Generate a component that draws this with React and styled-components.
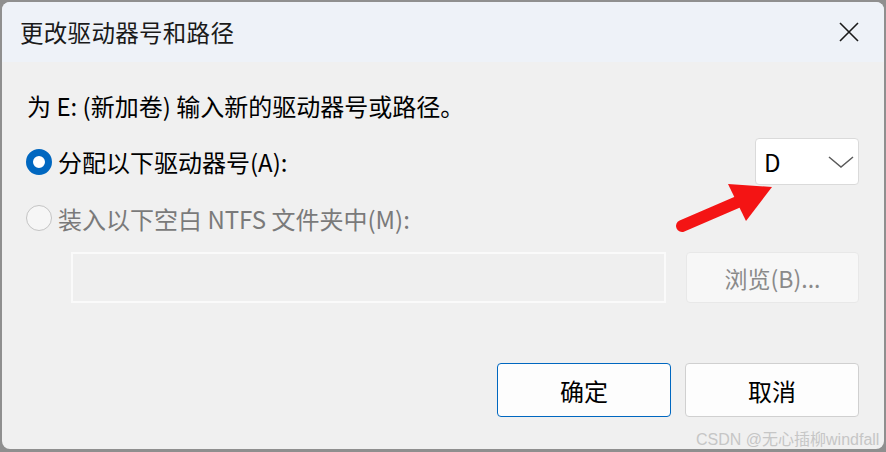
import React from "react";
import styled, { createGlobalStyle } from "styled-components";

const GlobalStyle = createGlobalStyle`
  html, body {
    margin: 0;
    padding: 0;
    background: #8f8f8f;
    overflow: hidden;
  }
  body {
    font-family: "Noto Sans CJK SC", "Noto Sans", sans-serif;
  }
`;

const Frame = styled.div`
  width: 886px;
  height: 452px;
  padding: 2px 2px 3px 2px;
  box-sizing: border-box;
`;

const Window = styled.div`
  position: relative;
  height: 100%;
  border-radius: 8px;
  background: #f0f0f0;
  overflow: hidden;
  display: flex;
  flex-direction: column;
`;

const TitleBar = styled.div`
  height: 60px;
  flex: none;
  display: flex;
  align-items: center;
  justify-content: space-between;
  padding: 0 24px 0 18px;
  background: #eef2f8;
`;

const Title = styled.div`
  font-size: 23.5px;
  color: #1a1a1a;
  letter-spacing: 0.3px;
`;

const CloseButton = styled.div`
  width: 22px;
  height: 22px;
  display: flex;
  align-items: center;
  justify-content: center;
`;

const Body = styled.div`
  flex: 1;
  display: flex;
  flex-direction: column;
  padding: 29px 25px 0 24px;
`;

const Prompt = styled.div`
  font-size: 24px;
  line-height: 30px;
  color: #000;
  padding-left: 1px;
`;

const OptionRow = styled.div`
  display: flex;
  align-items: center;
  justify-content: space-between;
  height: ${p => p.h}px;
  margin-top: ${p => p.mt}px;
`;

const RadioLabel = styled.label`
  display: flex;
  align-items: center;
  gap: 6px;
  font-size: 24px;
  color: ${p => (p.disabled ? "#7a7a7a" : "#000")};
`;

const Radio = styled.span`
  width: 26px;
  height: 26px;
  box-sizing: border-box;
  border-radius: 50%;
  flex: none;
  background: ${p => (p.checked ? "#fff" : "#f6f6f6")};
  border: ${p => (p.checked ? "7px solid #0067c0" : "1.5px solid #c4c4c4")};
`;

const Select = styled.div`
  width: 104px;
  height: 47px;
  box-sizing: border-box;
  background: #fff;
  border: 1px solid #dadada;
  border-radius: 4px;
  display: flex;
  align-items: center;
  justify-content: space-between;
  padding: 0 3px 0 8px;
  font-size: 24px;
  color: #000;
`;

const PathRow = styled.div`
  display: flex;
  gap: 20px;
  margin-top: 19px;
  padding-left: 45px;
  height: 51px;
`;

const PathInput = styled.div`
  flex: 1;
  box-sizing: border-box;
  border: 2px solid #fafafa;
  background: #efefef;
`;

const Button = styled.div`
  width: ${p => p.w}px;
  box-sizing: border-box;
  border-radius: 4px;
  display: flex;
  align-items: center;
  justify-content: center;
  font-size: ${p => (p.disabled ? 23 : 24)}px;
  background: ${p => (p.disabled ? "#f7f7f7" : "#fdfdfd")};
  color: ${p => (p.disabled ? "#8a8a8a" : "#000")};
  border: 1px solid ${p => (p.primary ? "#0067c0" : p.disabled ? "#e8e8e8" : "#d0d0d0")};
`;

const ButtonRow = styled.div`
  display: flex;
  justify-content: flex-end;
  gap: 14px;
  margin-top: 60px;
  height: 54px;
`;

const Arrow = styled.svg`
  position: absolute;
  left: 658px;
  top: 168px;
`;

const Watermark = styled.div`
  position: absolute;
  left: 694px;
  top: 424px;
  font-family: "Liberation Sans", "Noto Sans CJK SC", sans-serif;
  font-size: 16px;
  color: #c6c6c6;
  white-space: nowrap;
`;

export default function App() {
  return (
    <Frame>
      <GlobalStyle />
      <Window>
        <TitleBar>
          <Title>更改驱动器号和路径</Title>
          <CloseButton>
            <svg width="20" height="20" viewBox="0 0 20 20">
              <path d="M1 1 L19 19 M19 1 L1 19" stroke="#1a1a1a" strokeWidth="1.6" />
            </svg>
          </CloseButton>
        </TitleBar>
        <Body>
          <Prompt>为 E: (新加卷) 输入新的驱动器号或路径。</Prompt>
          <OptionRow h={47} mt={17}>
            <RadioLabel>
              <Radio checked />
              分配以下驱动器号(A):
            </RadioLabel>
            <Select>
              <span>D</span>
              <svg width="28" height="14" viewBox="0 0 28 14">
                <path d="M2 2 L14 12 L26 2" fill="none" stroke="#5a5a5a" strokeWidth="1.5" />
              </svg>
            </Select>
          </OptionRow>
          <OptionRow h={30} mt={18}>
            <RadioLabel disabled>
              <Radio />
              装入以下空白 NTFS 文件夹中(M):
            </RadioLabel>
          </OptionRow>
          <PathRow>
            <PathInput />
            <Button w={173} disabled>浏览(B)...</Button>
          </PathRow>
          <ButtonRow>
            <Button w={174} primary>确定</Button>
            <Button w={174}>取消</Button>
          </ButtonRow>
        </Body>
        <Arrow width="120" height="70" viewBox="658 168 120 70">
          <line x1="680" y1="224" x2="738" y2="199" stroke="#f41414" strokeWidth="12" strokeLinecap="round" />
          <polygon points="770,185 726,182 744,219" fill="#f41414" />
        </Arrow>
        <Watermark>CSDN @无心插柳windfall</Watermark>
      </Window>
    </Frame>
  );
}
